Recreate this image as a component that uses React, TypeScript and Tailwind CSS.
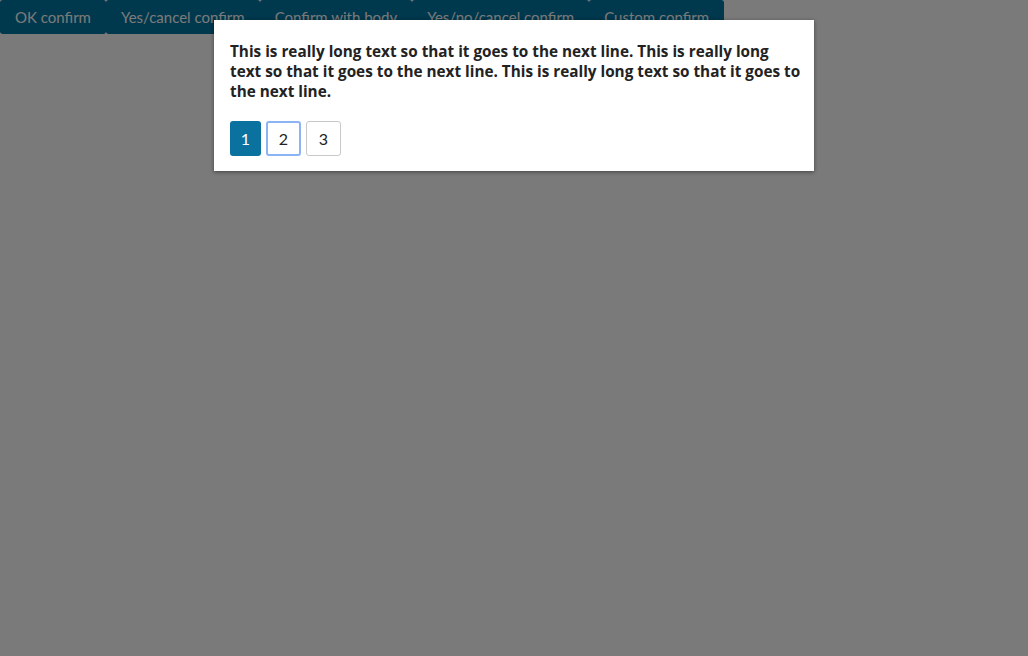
import { useState } from "react";

const buttons = [
  "OK confirm",
  "Yes/cancel confirm",
  "Confirm with body",
  "Yes/no/cancel confirm",
  "Custom confirm",
];

const text =
  "This is really long text so that it goes to the next line. This is really long text so that it goes to the next line. This is really long text so that it goes to the next line.";

export default function App() {
  const [page, setPage] = useState(1);

  return (
    <div className="relative h-[656px] w-full bg-white font-['Lato','Noto_Sans',sans-serif]">
      <div className="flex">
        {buttons.map((label) => (
          <button
            key={label}
            className="h-[34px] rounded-[3px] bg-[#0075a1] px-[15px] text-[15px] text-white"
          >
            {label}
          </button>
        ))}
      </div>

      {/* backdrop */}
      <div className="absolute inset-0 bg-black/[0.52]">
        <div className="mx-auto mt-[20px] w-[600px] bg-white pb-[15px] pl-4 pr-3 pt-4 shadow-[0_1px_4px_rgba(0,0,0,0.45)]">
          <p className="mt-[5px] font-['Open_Sans','Noto_Sans',sans-serif] text-[15.3px] font-bold leading-5 text-[#222]">
            {text}
          </p>
          <div className="mt-[20px] flex gap-[5px]">
            {[1, 2, 3].map((n) => (
              <button
                key={n}
                onClick={() => setPage(n)}
                className={
                  n === page
                    ? "h-[35px] w-[31px] rounded-[3px] bg-[#0b72a0] text-[16px] text-white"
                    : n === 2
                      ? "h-[35px] w-[35px] rounded-[3px] border-2 border-[#8cb4f5] bg-white text-[16px] text-[#222]"
                      : "h-[35px] w-[35px] rounded-[3px] border border-[#c8c8c8] bg-white text-[16px] text-[#222]"
                }
              >
                {n}
              </button>
            ))}
          </div>
        </div>
      </div>
    </div>
  );
}
